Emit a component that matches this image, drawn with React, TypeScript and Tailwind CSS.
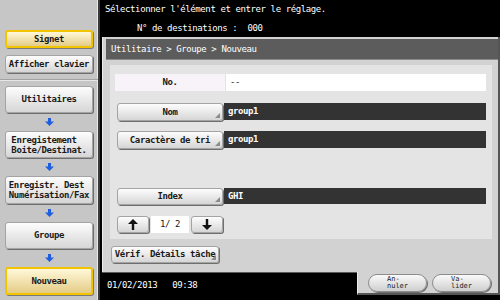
import React from 'react';

const mono = "font-['DejaVu_Sans_Mono','Liberation_Mono',monospace]";

function Corner() {
    return <span className="absolute bottom-[2px] right-[2px] w-0 h-0 border-l-[5px] border-l-transparent border-b-[5px] border-b-[#8c8c8c]" />;
}

function Btn({ children, className = '', corner = false }: { children: React.ReactNode; className?: string; corner?: boolean }) {
    return (
        <div className={`relative flex items-center justify-center rounded-[3px] border border-[#a4a4a4] bg-linear-to-b from-[#fdfdfd] to-[#d6d6d6] shadow-[1px_1px_0_#6e6e6e] text-[#1a1a1a] ${className}`}>
            {children}
            {corner && <Corner />}
        </div>
    );
}

function YellowBtn({ children, className = '' }: { children: React.ReactNode; className?: string }) {
    return (
        <div className={`flex items-center justify-center rounded-[3px] border-2 border-[#f2c400] bg-linear-to-b from-[#fff8d8] to-[#e4cc86] shadow-[1px_1px_0_#7a7a7a] text-[#1a1a1a] ${className}`}>
            {children}
        </div>
    );
}

function BlueArrow() {
    return (
        <div className="h-[18px] flex items-center justify-center">
            <svg width="9" height="8" viewBox="0 0 9 8">
                <rect x="3" y="0" width="3" height="4" fill="#1f5ee0" />
                <polygon points="0,3.5 9,3.5 4.5,8" fill="#1f5ee0" />
            </svg>
        </div>
    );
}

function PagerArrow({ up }: { up: boolean }) {
    return (
        <svg width="10" height="11" viewBox="0 0 10 11">
            {up ? (
                <>
                    <polygon points="0,5 5,0 10,5" fill="#111" />
                    <rect x="3.8" y="4" width="2.4" height="7" fill="#111" />
                </>
            ) : (
                <>
                    <rect x="3.8" y="0" width="2.4" height="7" fill="#111" />
                    <polygon points="0,6 5,11 10,6" fill="#111" />
                </>
            )}
        </svg>
    );
}

export default function App() {
    return (
        <div className={`w-[500px] h-[300px] flex overflow-hidden bg-black text-[9px] leading-[11px] tracking-[-0.4px] ${mono}`}>
            {/* sidebar */}
            <div className="w-[100px] h-full flex flex-col bg-[#c6c6c6] border-r-2 border-r-[#3a3a3a] shadow-[inset_-1px_0_0_#e8e8e8] font-bold">
                <div className="h-[80px] flex flex-col px-[5px] pt-[30px] gap-[7px] border-b border-b-[#a2a2a2] shadow-[0_1px_0_#e6e6e6]">
                    <YellowBtn className="h-[18px]">Signet</YellowBtn>
                    <Btn className="h-[18px] rounded-[3px]">Afficher clavier</Btn>
                </div>
                <div className="flex flex-col px-[5px] pt-[6px]">
                    <Btn className="h-[27px]">Utilitaires</Btn>
                    <BlueArrow />
                    <Btn className="h-[27px]">
                        <div className="text-left leading-[10px]">Enregistement<br />Boite/Destinat.</div>
                    </Btn>
                    <BlueArrow />
                    <Btn className="h-[28px]">
                        <div className="text-left leading-[10px]">Enregistr. Dest<br />Numérisation/Fax</div>
                    </Btn>
                    <BlueArrow />
                    <Btn className="h-[27px]">Groupe</Btn>
                    <BlueArrow />
                    <YellowBtn className="h-[28px]">Nouveau</YellowBtn>
                </div>
            </div>

            {/* main */}
            <div className="flex-1 flex flex-col text-white">
                <div className="h-[37px] flex flex-col pt-[3px]">
                    <div className="pl-[5px] h-[12px] leading-[12px]">Sélectionner l'élément et entrer le réglage.</div>
                    <div className="pl-[37px] mt-[7px] h-[12px] leading-[12px] whitespace-pre">N° de destinations :  000</div>
                </div>

                <div className="ml-[2px] h-[235px] flex flex-col bg-[#d2d2d2] border-l border-l-[#ececec] border-r-2 border-r-[#555] text-[#1a1a1a]">
                    <div className="mt-[2px] ml-[3px] h-[21px] flex items-center pl-[5px] bg-[#5c5c5c] text-white border-b border-b-[#8a8a8a]">
                        Utilitaire &gt; Groupe &gt; Nouveau
                    </div>
                    <div className="mt-[5px] ml-[7px] mr-[6px] flex flex-col bg-[#e4e4e4] pl-[5px] pr-[6px] pt-[9px] pb-[6px] font-bold">
                        <div className="h-[17px] flex gap-[1px]">
                            <div className="w-[110px] flex items-center justify-center bg-[#f8f3f8]">No.</div>
                            <div className="flex-1 flex items-center pl-[4px] bg-white font-normal">--</div>
                        </div>
                        <div className="mt-[12px] h-[18px] flex items-start gap-[1px]">
                            <Btn corner className="w-[106px] h-[18px] ml-[2px]">Nom</Btn>
                            <div className="flex-1 h-[17px] flex items-center pl-[4px] bg-[#333] text-white">group1</div>
                        </div>
                        <div className="mt-[10px] h-[18px] flex items-start gap-[1px]">
                            <Btn corner className="w-[106px] h-[18px] ml-[2px]">Caractère de tri</Btn>
                            <div className="flex-1 h-[17px] flex items-center pl-[4px] bg-[#333] text-white">group1</div>
                        </div>
                        <div className="mt-[39px] h-[17px] flex items-start gap-[1px]">
                            <Btn corner className="w-[106px] h-[17px] ml-[2px]">Index</Btn>
                            <div className="flex-1 h-[16px] flex items-center pl-[4px] bg-[#333] text-white">GHI</div>
                        </div>
                        <div className="mt-[11px] h-[17px] flex items-center ml-[2px] gap-[2px]">
                            <Btn className="w-[32px] h-[17px]"><PagerArrow up /></Btn>
                            <div className="w-[38px] h-[17px] flex items-center justify-center bg-white whitespace-pre font-normal">1/ 2</div>
                            <Btn className="w-[32px] h-[17px]"><PagerArrow up={false} /></Btn>
                        </div>
                    </div>
                    <Btn corner className="mt-[7px] ml-[8px] w-[108px] h-[17px] font-bold">Vérif. Détails tâche</Btn>
                </div>

                <div className="flex h-[23px]">
                    <div className="flex-1 flex items-center pl-[5px] pt-[2px] border-t border-t-[#5a5a5a] ml-[2px] whitespace-pre">01/02/2013   09:38</div>
                    <div className="w-[143px] flex items-center gap-[5px] pl-[10px] bg-[#d2d2d2] border-l border-l-[#ececec] border-r-2 border-r-[#555] border-b-2 border-b-[#555] text-[#1a1a1a] text-[7px] leading-[7px] tracking-normal">
                        <div className="w-[59px] h-[18px] flex items-center justify-center rounded-full border border-[#8c8c8c] bg-linear-to-b from-[#fafafa] to-[#cfcfcf] shadow-[1px_1px_0_#6e6e6e]">
                            <div className="text-left">An-<br />nuler</div>
                        </div>
                        <div className="w-[59px] h-[18px] flex items-center justify-center rounded-full border border-[#8c8c8c] bg-linear-to-b from-[#fafafa] to-[#cfcfcf] shadow-[1px_1px_0_#6e6e6e]">
                            <div className="text-left">Va-<br />lider</div>
                        </div>
                    </div>
                </div>
            </div>
        </div>
    );
}
